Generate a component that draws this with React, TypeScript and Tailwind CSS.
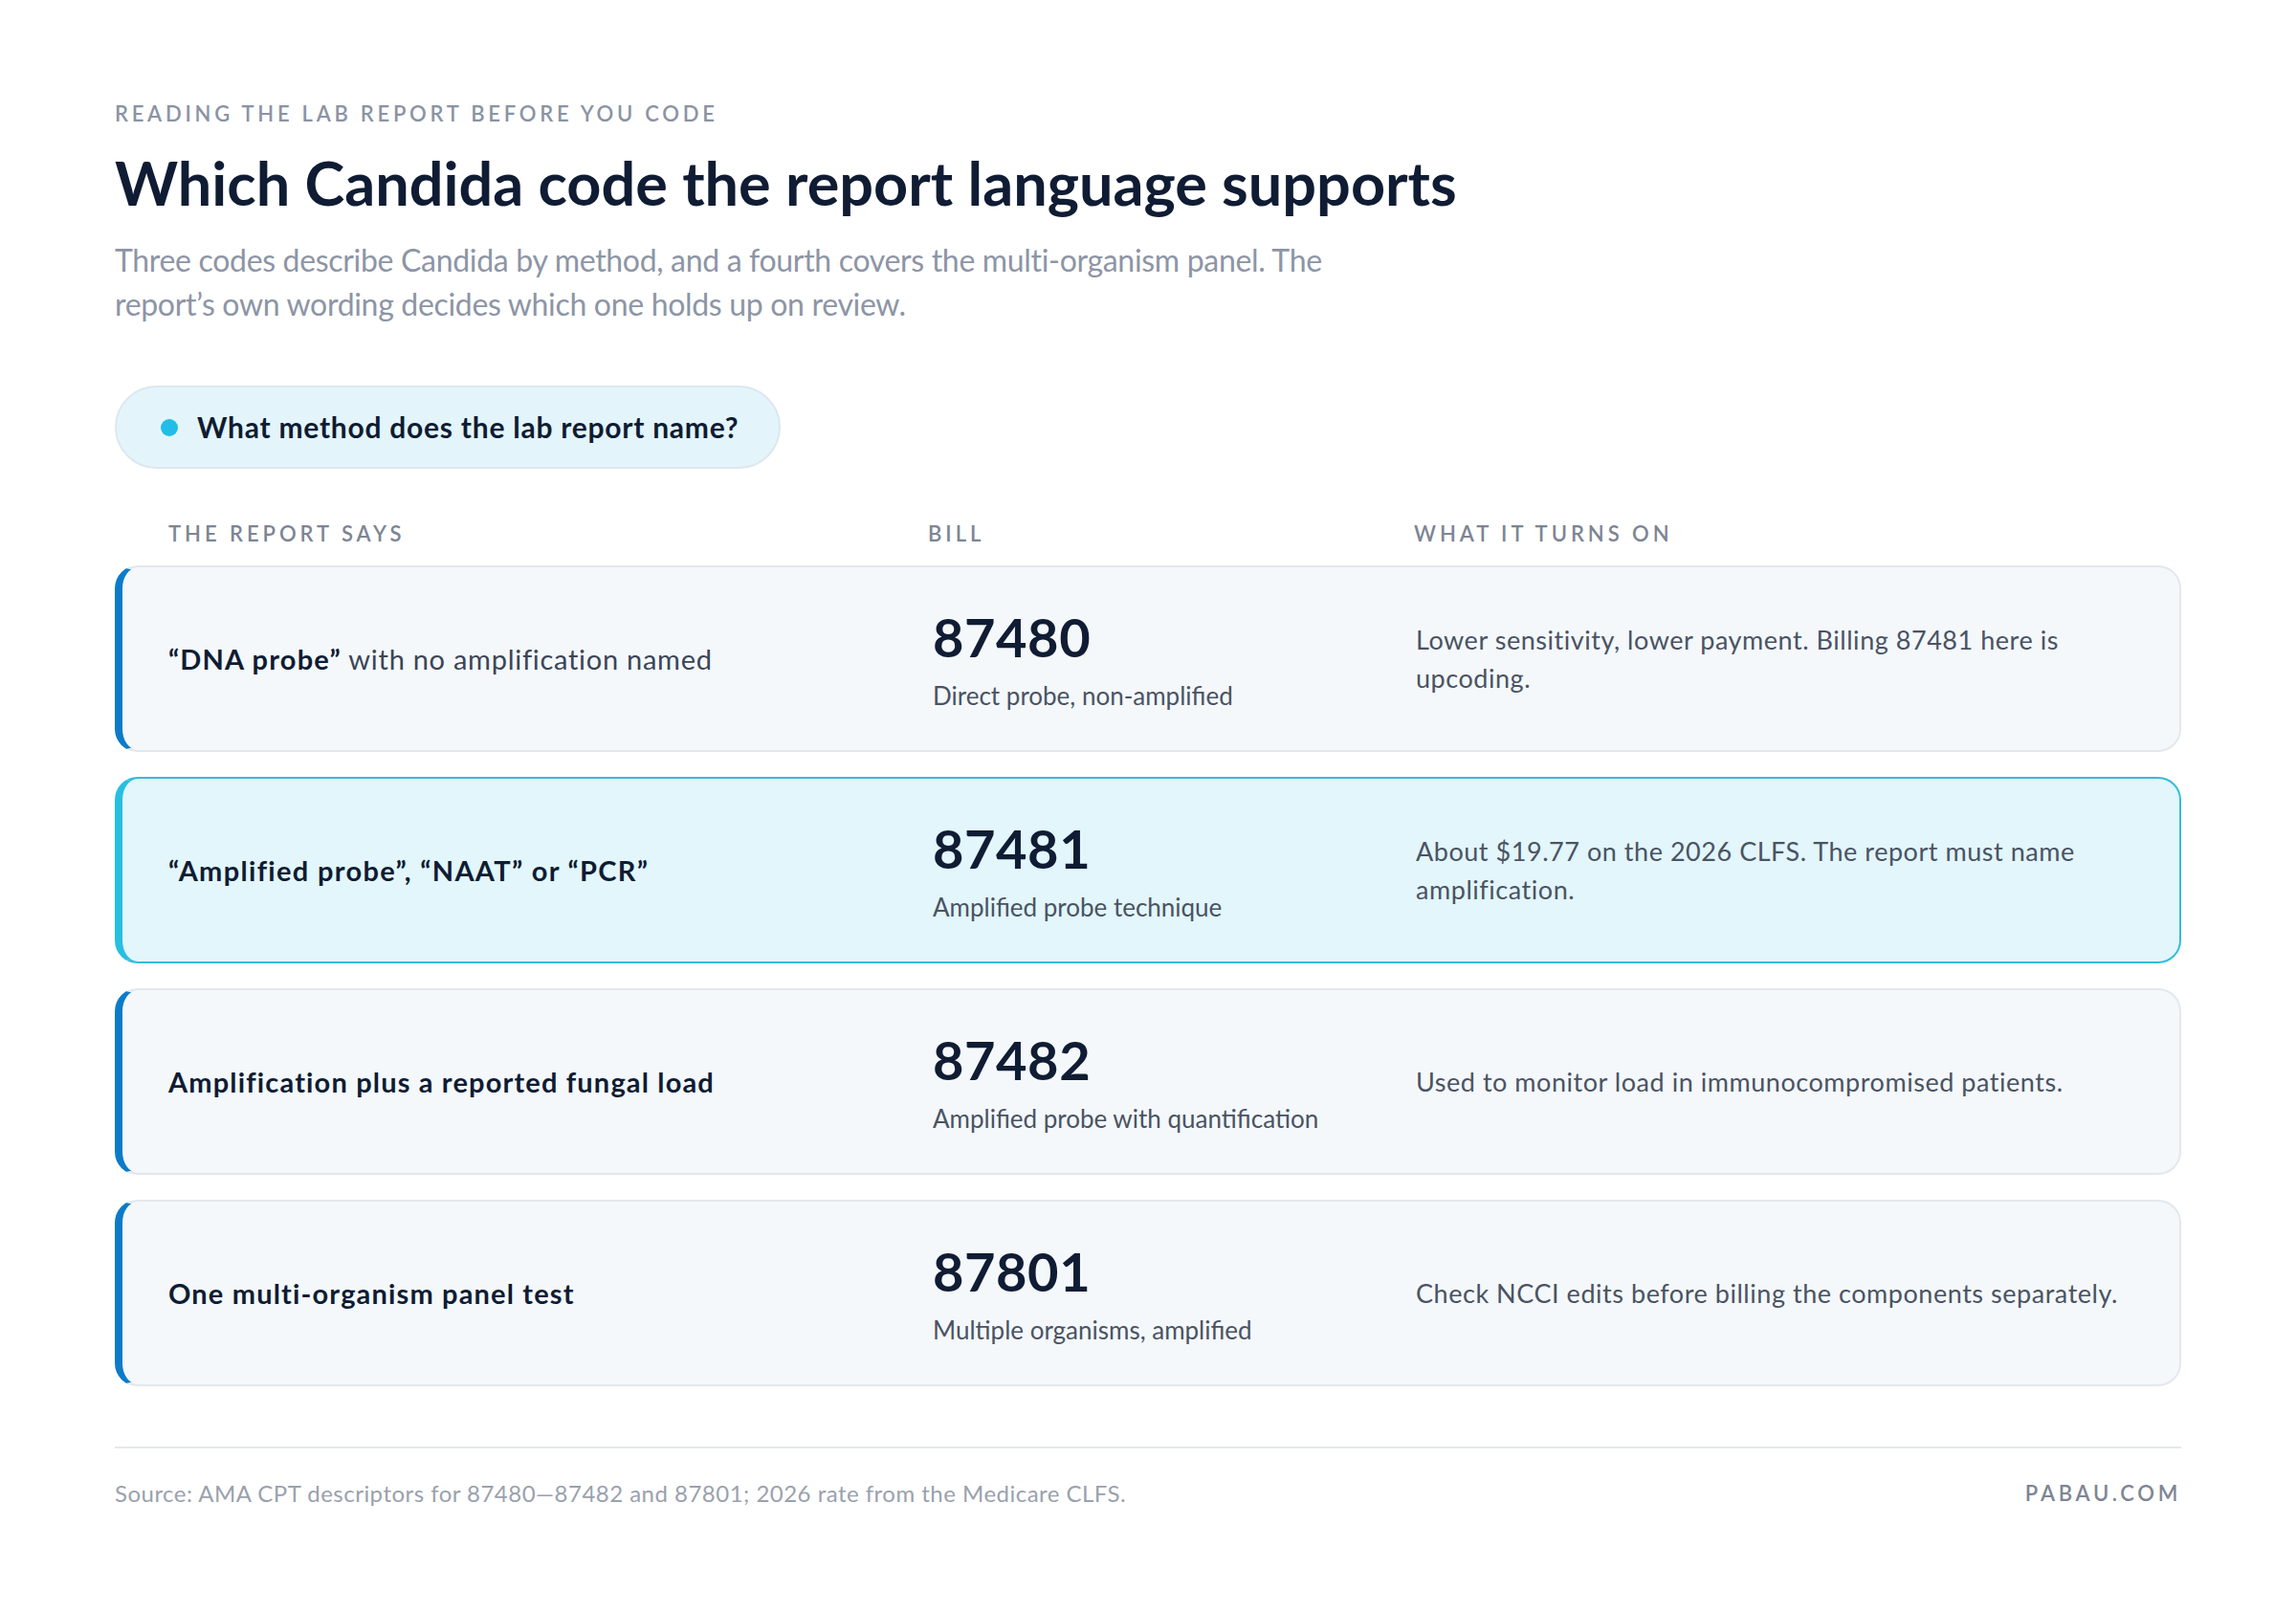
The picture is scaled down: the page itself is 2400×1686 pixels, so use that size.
const rows = [
  {
    says: (
      <>
        <span className="font-bold tracking-[0.04em] text-[#0f1c33]">“DNA probe”</span> with no amplification named
      </>
    ),
    code: "87480",
    desc: "Direct probe, non-amplified",
    note: "Lower sensitivity, lower payment. Billing 87481 here is upcoding.",
    active: false,
  },
  {
    says: <span className="font-bold tracking-[0.045em] text-[#0f1c33]">“Amplified probe”, “NAAT” or “PCR”</span>,
    code: "87481",
    desc: "Amplified probe technique",
    note: "About $19.77 on the 2026 CLFS. The report must name amplification.",
    active: true,
  },
  {
    says: <span className="font-bold tracking-[0.04em] text-[#0f1c33]">Amplification plus a reported fungal load</span>,
    code: "87482",
    desc: "Amplified probe with quantification",
    note: "Used to monitor load in immunocompromised patients.",
    active: false,
  },
  {
    says: <span className="font-bold tracking-[0.04em] text-[#0f1c33]">One multi-organism panel test</span>,
    code: "87801",
    desc: "Multiple organisms, amplified",
    note: "Check NCCI edits before billing the components separately.",
    active: false,
  },
];

export default function App() {
  return (
    <div className="min-h-screen bg-white font-['Lato',sans-serif] text-[#0f1c33]">
      <div className="px-[120px] pt-[108px] pb-[100px]">
        <p className="text-[22px] leading-none font-semibold tracking-[0.17em] text-[#8a93a3] uppercase">
          Reading the lab report before you code
        </p>
        <h1 className="mt-[29px] text-[63px] leading-none font-bold text-[#0f1c33]">
          Which Candida code the report language supports
        </h1>
        <p className="mt-[27px] max-w-[1300px] text-[32px] leading-[46px] tracking-[-0.01em] text-[#8d95a5]">
          Three codes describe Candida by method, and a fourth covers the multi-organism panel. The
          report’s own wording decides which one holds up on review.
        </p>

        <div className="mt-[62px] inline-flex h-[87px] w-[696px] items-center gap-[20px] rounded-full border-2 border-[#dde7ee] bg-[#e3f5fb] pl-[46px]">
          <span className="h-[18px] w-[18px] rounded-full bg-[#22bde6]" />
          <span className="text-[30px] font-bold tracking-[0.025em] text-[#0f1c33]">
            What method does the lab report name?
          </span>
        </div>

        <div className="mt-[57px] grid grid-cols-[794px_508px_1fr] pl-[56px] text-[22px] leading-none font-semibold tracking-[0.18em] text-[#7d8594] uppercase">
          <span>The report says</span>
          <span>Bill</span>
          <span>What it turns on</span>
        </div>

        <div className="mt-[22px] flex flex-col gap-[26px]">
          {rows.map((r) => (
            <div
              key={r.code}
              className={
                r.active
                  ? "grid h-[195px] grid-cols-[799px_505px_1fr] items-center rounded-[24px] border-2 border-l-[8px] border-[#34bcd9] border-l-[#26bfe2] bg-[#e2f6fb] pr-[56px] pl-[48px]"
                  : "grid h-[195px] grid-cols-[799px_505px_1fr] items-center rounded-[24px] border-2 border-l-[8px] border-[#e3e8ee] border-l-[#0b7bc9] bg-[#f4f8fb] pr-[56px] pl-[48px]"
              }
            >
              <div className="text-[29px] tracking-[0.025em] text-[#3b4556]">{r.says}</div>
              <div>
                <div className="text-[56px] leading-none font-bold tracking-[0.01em] text-[#0f1c33]">{r.code}</div>
                <div className="mt-[20px] text-[26px] leading-none text-[#4a5363]">{r.desc}</div>
              </div>
              <div className="text-[27px] leading-[40px] tracking-[0.02em] text-[#4a5363]">{r.note}</div>
            </div>
          ))}
        </div>

        <div className="mt-[63px] h-[2px] bg-[#e5e8ec]" />

        <div className="mt-[35px] flex items-center justify-between leading-none">
          <span className="text-[24px] tracking-[0.02em] text-[#9aa1ad]">
            Source: AMA CPT descriptors for 87480—87482 and 87801; 2026 rate from the Medicare CLFS.
          </span>
          <span className="text-[22px] font-semibold tracking-[0.17em] text-[#7d8594]">PABAU.COM</span>
        </div>
      </div>
    </div>
  );
}
